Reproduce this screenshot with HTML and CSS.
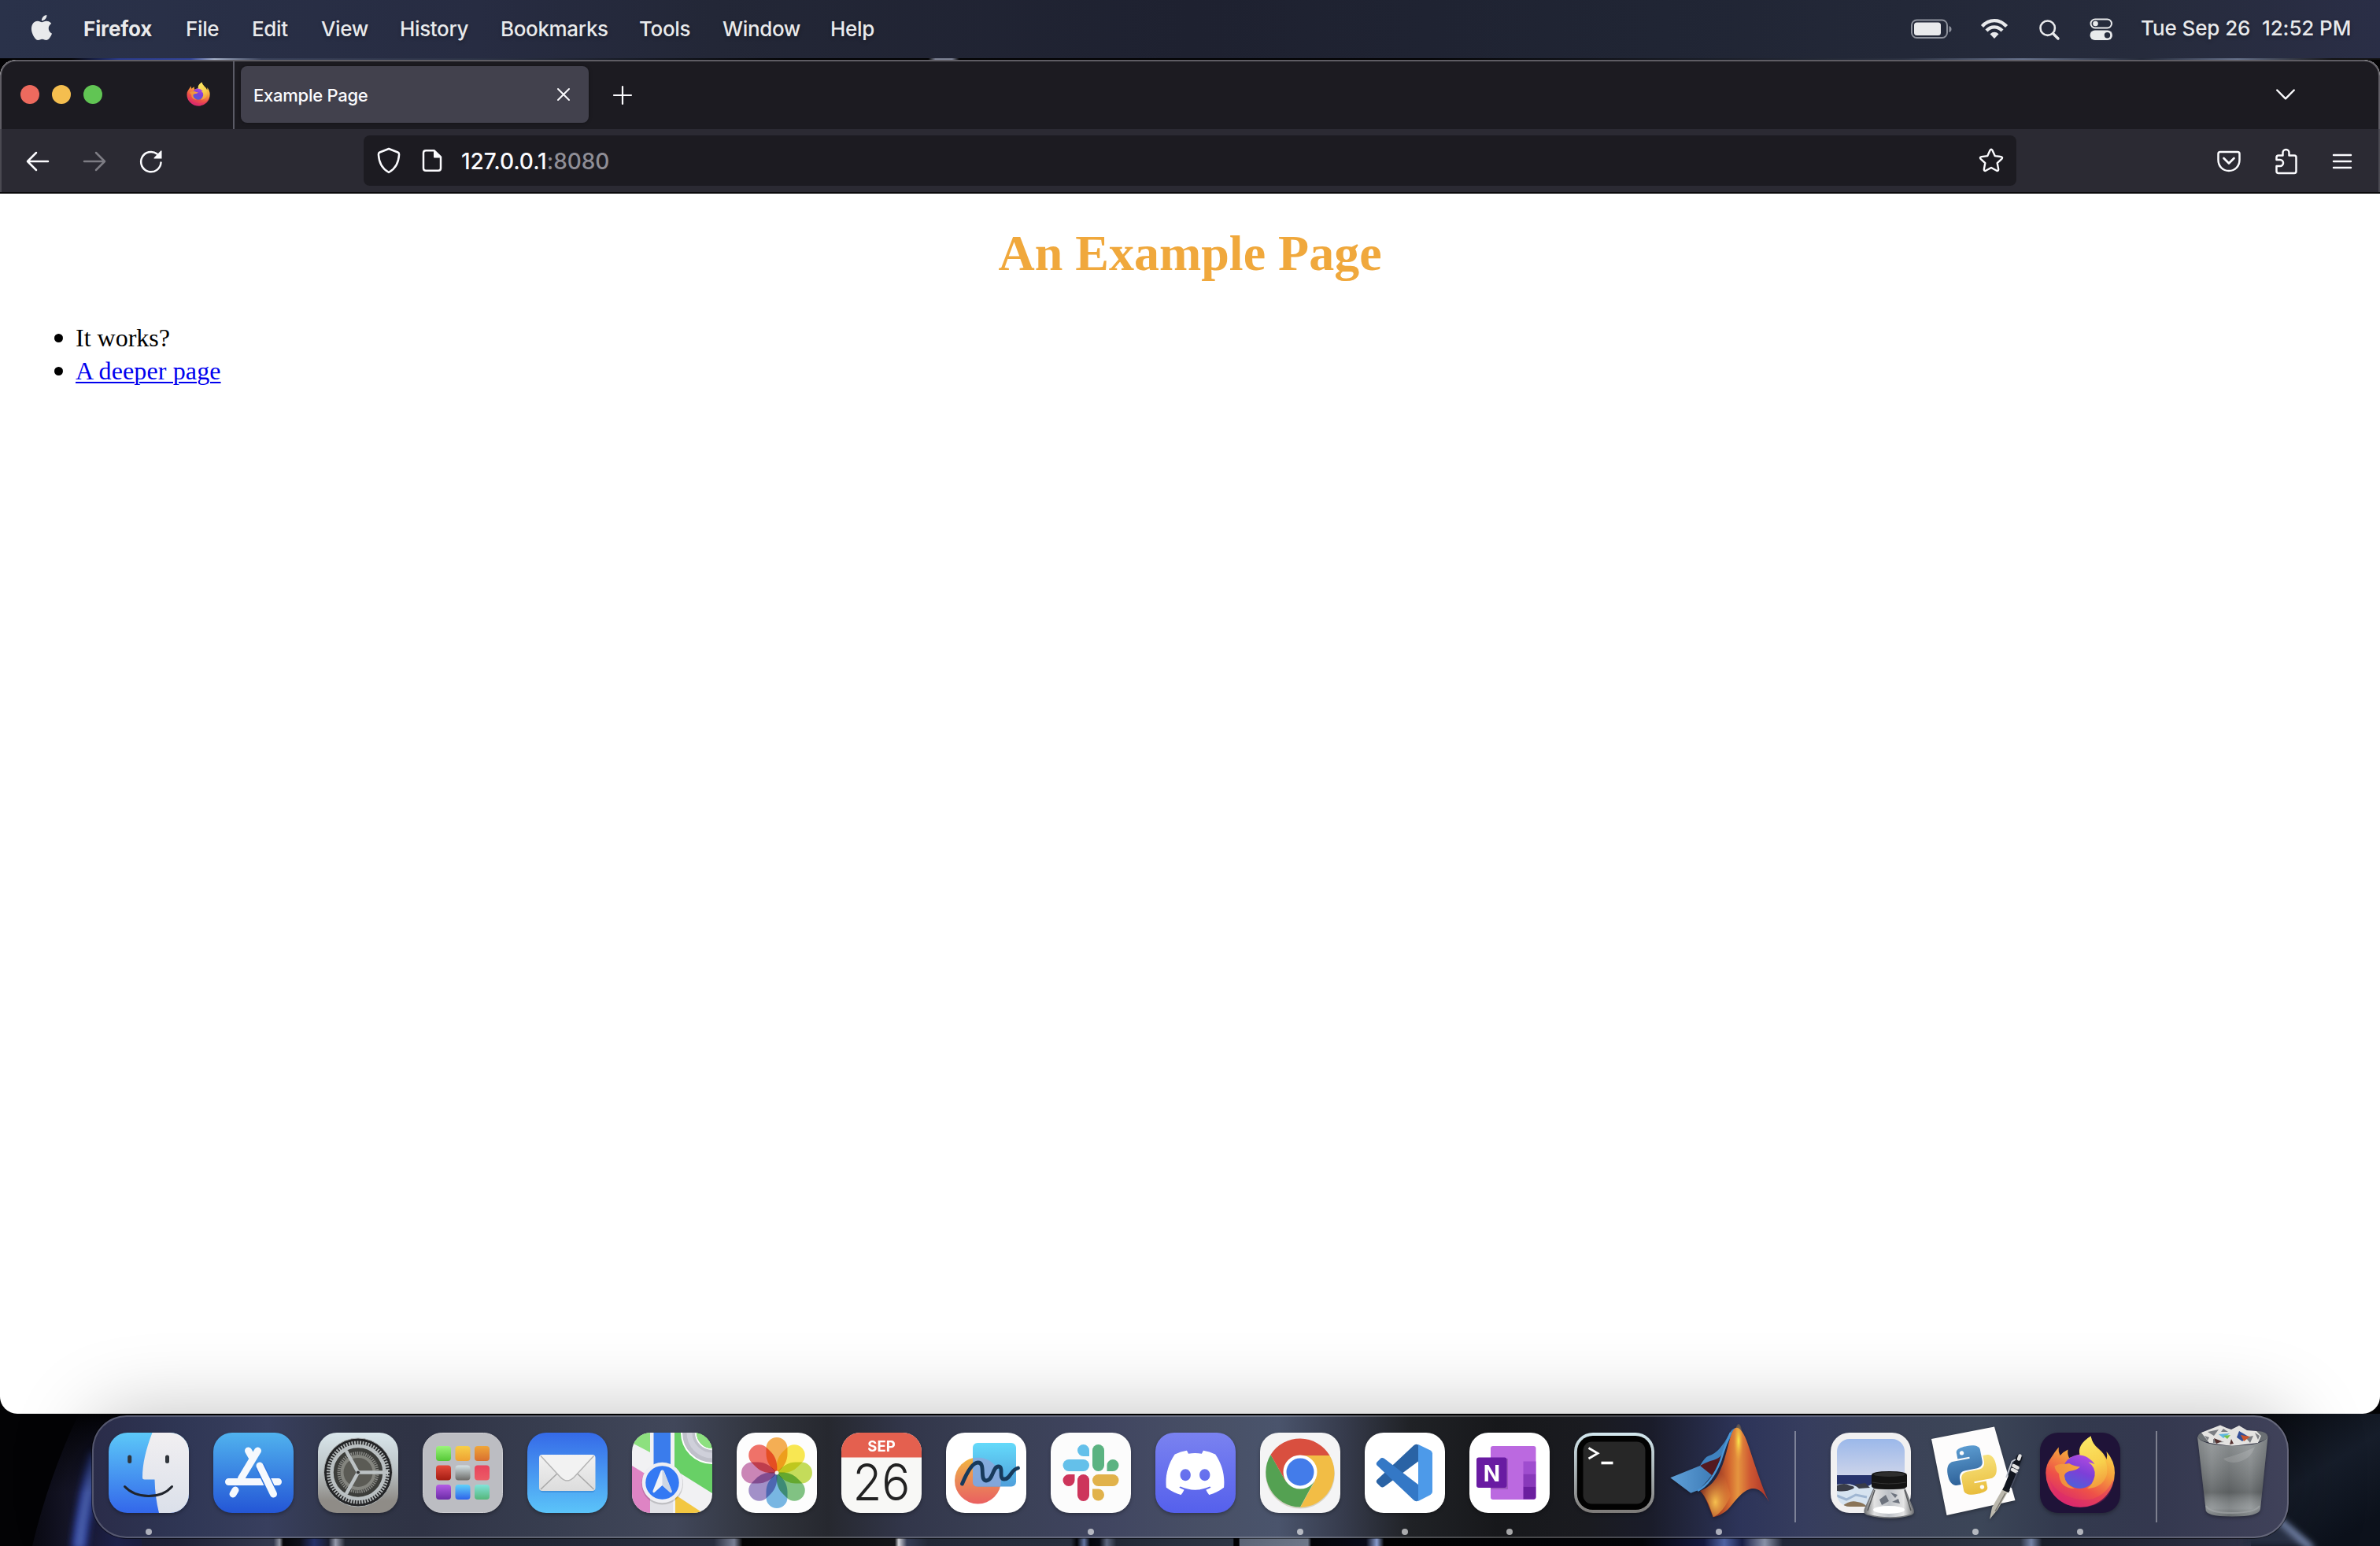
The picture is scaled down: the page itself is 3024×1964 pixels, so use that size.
FILE: index.html
```html
<!DOCTYPE html>
<html lang="en">
<head>
<meta charset="utf-8">
<title>Example Page</title>
<link rel="stylesheet" href="styles.css">
</head>
<body>
<div class="desktop">
  <header class="menubar">
    <nav class="menus">
      <svg class="apple" viewBox="0 0 24 24"><path d="M12.152 6.896c-.948 0-2.415-1.078-3.96-1.04-2.04.027-3.91 1.183-4.961 3.014-2.117 3.675-.546 9.103 1.519 12.09 1.013 1.454 2.208 3.09 3.792 3.039 1.52-.065 2.09-.987 3.935-.987 1.831 0 2.35.987 3.96.948 1.637-.026 2.676-1.48 3.676-2.948 1.156-1.688 1.636-3.325 1.662-3.415-.039-.013-3.182-1.221-3.22-4.857-.026-3.04 2.48-4.494 2.597-4.559-1.429-2.09-3.623-2.324-4.39-2.376-2-.156-3.675 1.09-4.61 1.09zM15.53 3.83c.843-1.012 1.4-2.427 1.245-3.83-1.207.052-2.662.805-3.532 1.818-.78.896-1.454 2.338-1.273 3.714 1.338.104 2.715-.688 3.559-1.701"/></svg>
      <span class="menu m-app">Firefox</span>
      <span class="menu m-file">File</span>
      <span class="menu m-edit">Edit</span>
      <span class="menu m-view">View</span>
      <span class="menu m-history">History</span>
      <span class="menu m-bookmarks">Bookmarks</span>
      <span class="menu m-tools">Tools</span>
      <span class="menu m-window">Window</span>
      <span class="menu m-help">Help</span>
    </nav>
    <div class="status">
      <svg class="battery" viewBox="0 0 52 26"><rect x="1" y="1.5" width="45" height="22.500" rx="6.500" fill="none" stroke="#8d919c" stroke-width="2"/><rect x="4" y="4.500" width="34" height="16.500" rx="3.500" fill="#e9eaec"/><path d="M48.500 9v8q3-1 3-4t-3-4z" fill="#8d919c"/></svg>
      <svg class="wifi" viewBox="0 0 34 26"><g fill="none" stroke="#e9eaec" stroke-width="4.200"><path d="M1.500 10.500Q8 3.200 17 3.200T32.500 10.500"/><path d="M7 16Q11.200 11.300 17 11.300T27 16"/></g><path d="M11.500 20.200Q17 15.500 22.500 20.200L17 26z" fill="#e9eaec"/></svg>
      <svg class="search" viewBox="0 0 26 26"><circle cx="10.700" cy="10.700" r="9.200" fill="none" stroke="#e9eaec" stroke-width="2.600"/><path d="M17.500 17.500l6.500 6.500" stroke="#e9eaec" stroke-width="3.400" stroke-linecap="round"/></svg>
      <svg class="control" viewBox="0 0 30 28"><rect x="1.500" y="1.500" width="26.500" height="11" rx="5.500" fill="none" stroke="#e9eaec" stroke-width="2"/><circle cx="7.500" cy="7" r="3.300" fill="#e9eaec"/><rect x=".5" y="15.500" width="28.500" height="12.500" rx="6.250" fill="#e9eaec"/><circle cx="22.500" cy="21.700" r="3.700" fill="#262c3d"/></svg>
      <span class="clock clock-date">Tue Sep 26</span>
      <span class="clock clock-time">12:52 PM</span>
    </div>
  </header>
  <div class="sliver"></div>

  <main class="window">
    <div class="tabstrip">
      <div class="lights"><i class="light close"></i><i class="light minimise"></i><i class="light zoom"></i></div>
      <svg class="pinned" viewBox="6 3 90 93"><use href="#firefox"/></svg>
      <div class="tab-edge"></div>
      <div class="tab"><span class="tab-title">Example Page</span>
        <svg class="tab-close" viewBox="0 0 16 16"><path d="M1 1l14 14M15 1L1 15" stroke="#fbfbfe" stroke-width="2" stroke-linecap="round"/></svg>
      </div>
      <svg class="newtab" viewBox="0 0 24 24"><path d="M12 1v22M1 12h22" stroke="#fbfbfe" stroke-width="2.200" stroke-linecap="round"/></svg>
      <svg class="alltabs" viewBox="0 0 24 14"><path d="M1.200 1.500L12 12.300 22.800 1.500" fill="none" stroke="#fbfbfe" stroke-width="2.400" stroke-linecap="round" stroke-linejoin="round"/></svg>
    </div>
    <div class="toolbar">
      <svg class="nav-icon" viewBox="0 0 32 32"><path d="M29 16H3.500M14 5L3 16l11 11" fill="none" stroke="#fbfbfe" stroke-width="2.500" stroke-linecap="round" stroke-linejoin="round"/></svg>
      <svg class="nav-icon" viewBox="0 0 32 32"><path d="M3 16h25.500M18 5l11 11-11 11" fill="none" stroke="#7d7c84" stroke-width="2.500" stroke-linecap="round" stroke-linejoin="round"/></svg>
      <svg class="nav-icon" viewBox="0 0 32 32"><path d="M28.500 17.500A12.700 12.700 0 1 1 23.500 6.500" fill="none" stroke="#fbfbfe" stroke-width="2.500" stroke-linecap="round"/><path d="M28.300 2.500q1.200-.8 1.200.8v9.200H20.500q-1.800 0-.5-1.500z" fill="#fbfbfe"/></svg>
      <div class="urlbar">
        <svg class="shield" viewBox="0 0 30 34"><path d="M15 2l11.500 4.500q1.700.8 1.600 2.800C27.500 20 23.500 27.500 15 32 6.500 27.500 2.500 20 1.900 9.300q-.1-2 1.600-2.800z" fill="none" stroke="#fbfbfe" stroke-width="2.500" stroke-linejoin="round"/></svg>
        <svg class="doc" viewBox="0 0 26 30"><path d="M15.500 2.200H5q-3 0-3 3v19.600q0 3 3 3h16q3 0 3-3V10.500z" fill="none" stroke="#fbfbfe" stroke-width="2.500" stroke-linejoin="round"/><path d="M15 2v8.500q0 1 1 1h8z" fill="#fbfbfe"/></svg>
        <span class="url">127.0.0.1<span class="port">:8080</span></span>
        <svg class="star" viewBox="0 0 32 32"><path d="M14.600 2.800q1.400-2.300 2.800 0l3.300 7.300 7.800 1q2.500.7.900 2.700l-5.700 5.400 1.500 7.900q0 2.500-2.300 1.700L16 25l-6.900 3.800q-2.300.8-2.300-1.700l1.500-7.900-5.700-5.400q-1.600-2 .9-2.700l7.800-1z" fill="none" stroke="#fbfbfe" stroke-width="2.400" stroke-linejoin="round"/></svg>
      </div>
      <div class="tools">
        <svg class="pocket" viewBox="0 0 30 28"><path d="M4 2h22q2.500 0 2.500 2.500V12C28.500 20 23 26 15 26S1.500 20 1.500 12V4.500Q1.500 2 4 2z" fill="none" stroke="#fbfbfe" stroke-width="2.500"/><path d="M8.500 10l6.500 6.500 6.500-6.500" fill="none" stroke="#fbfbfe" stroke-width="2.700" stroke-linecap="round" stroke-linejoin="round"/></svg>
        <svg class="puzzle" viewBox="0 0 28 34"><path d="M9.500 9V6a4 4 0 0 1 8 0v3.500H24q2.500 0 2.500 2.500v17.500q0 2.500-2.500 2.500H4q-2.500 0-2.500-2.500V23H6a4 4 0 0 0 0-8H1.500v-3q0-2.500 2.500-2.500h5.500z" fill="none" stroke="#fbfbfe" stroke-width="2.500" stroke-linejoin="round"/></svg>
        <svg class="burger" viewBox="0 0 24 20"><path d="M1 2h22M1 10h22M1 18h22" stroke="#fbfbfe" stroke-width="2.400" stroke-linecap="round"/></svg>
      </div>
    </div>
    <article class="page">
      <h1>An Example Page</h1>
      <ul class="list">
        <li>It works?</li>
        <li><a href="#deeper">A deeper page</a></li>
      </ul>
    </article>
  </main>

  <footer class="shelf">
    <svg class="wallpaper" viewBox="0 0 3024 168" preserveAspectRatio="none">
      <defs>
        <linearGradient id="wl" x1="0" x2="1" y1="0" y2="0"><stop offset="0" stop-color="#0a0a12"/><stop offset=".3" stop-color="#17172b"/><stop offset=".6" stop-color="#202450"/><stop offset="1" stop-color="#1b1e38"/></linearGradient>
        <linearGradient id="wt" x2="0" y2="1"><stop stop-color="#030305"/><stop offset=".6" stop-color="#030305" stop-opacity="0"/></linearGradient>
        <linearGradient id="wr" x1="0" y1="0" x2=".6" y2="1"><stop offset="0" stop-color="#07090e"/><stop offset=".55" stop-color="#161d2a"/><stop offset="1" stop-color="#0c111b"/></linearGradient>
        <linearGradient id="strip" gradientUnits="userSpaceOnUse" x1="0" y1="0" x2="3024" y2="0">
          <stop offset=".04" stop-color="#1b1e38"/><stop offset=".075" stop-color="#23263d"/><stop offset=".115" stop-color="#3a4058"/><stop offset=".1175" stop-color="#a5a9b8"/><stop offset=".119" stop-color="#08080c"/><stop offset=".126" stop-color="#11131f"/><stop offset=".132" stop-color="#2a3878"/><stop offset=".138" stop-color="#1d2236"/><stop offset=".141" stop-color="#a8aec2"/><stop offset=".145" stop-color="#252b3a"/><stop offset=".2" stop-color="#232938"/><stop offset=".3" stop-color="#2e3447"/><stop offset=".3085" stop-color="#8890a8"/><stop offset=".312" stop-color="#050506"/><stop offset=".376" stop-color="#17181d"/><stop offset=".3776" stop-color="#f0f1f8"/><stop offset=".381" stop-color="#3c4460"/><stop offset=".39" stop-color="#272e3e"/><stop offset=".45" stop-color="#2d3546"/><stop offset=".4525" stop-color="#04050a"/><stop offset=".4555" stop-color="#7085b8"/><stop offset=".458" stop-color="#05070e"/><stop offset=".462" stop-color="#0a0d18"/><stop offset=".465" stop-color="#6a7590"/><stop offset=".469" stop-color="#272e3d"/><stop offset=".518" stop-color="#343d4e"/><stop offset=".5185" stop-color="#020204"/><stop offset=".5205" stop-color="#020204"/><stop offset=".521" stop-color="#697387"/><stop offset=".5495" stop-color="#7d879b"/><stop offset=".551" stop-color="#04050a"/><stop offset=".574" stop-color="#0a0c1c"/><stop offset=".5785" stop-color="#9ab0e8"/><stop offset=".5815" stop-color="#020203"/><stop offset=".69" stop-color="#04050a"/><stop offset=".716" stop-color="#181d48"/><stop offset=".7245" stop-color="#5a70b8"/><stop offset=".732" stop-color="#1c2350"/><stop offset=".7415" stop-color="#9aa4bd"/><stop offset=".749" stop-color="#262c40"/><stop offset=".8" stop-color="#2b3240"/><stop offset=".849" stop-color="#343c4e"/><stop offset=".8535" stop-color="#8495bd"/><stop offset=".858" stop-color="#1d2230"/><stop offset=".95" stop-color="#35384f"/>
        </linearGradient>
        <filter id="soft" x="-100%" y="-50%" width="300%" height="200%"><feGaussianBlur stdDeviation="4"/></filter>
      </defs>
      <rect width="3024" height="168" fill="#030305"/>
      <path d="M100 0Q62 80 41 168H220V0z" fill="url(#wl)"/>
      <path d="M124 50Q107 110 100 172" fill="none" stroke="#2c3c9c" stroke-width="20" filter="url(#soft)"/>
      <path d="M124 50Q107 110 100 172" fill="none" stroke="#5c74bc" stroke-width="7" filter="url(#soft)"/>
      <path d="M0 0H220V168H0z" fill="url(#wt)"/>
      <path d="M180 150H2880V168H180z" fill="url(#strip)"/>
      <path d="M2860 0h164v168h-164z" fill="url(#wr)"/>
      <path d="M2850 168V140L2893 134 2938 168z" fill="#2c3046" filter="url(#soft)"/>
      <path d="M2890 130l48 42" stroke="#8fa3cf" stroke-width="7" filter="url(#soft)"/>
    </svg>
    <div class="dock">
      <div class="slot running">
        <svg class="icon" viewBox="0 0 102 102">
          <defs><linearGradient id="fb" x2="0" y2="1"><stop stop-color="#5cc8f8"/><stop offset="1" stop-color="#3367ea"/></linearGradient><linearGradient id="fw" x2="0" y2="1"><stop stop-color="#f1eff1"/><stop offset="1" stop-color="#dbe0ea"/></linearGradient><clipPath id="sq"><rect width="102" height="102" rx="24"/></clipPath></defs>
          <g clip-path="url(#sq)"><rect width="102" height="102" fill="url(#fb)"/><path d="M55.500 0C47 22 43 40 43 57q0 2.500 2.500 2.500H58.500Q59 82 64 102H102V0z" fill="url(#fw)"/></g>
          <path d="M26.700 31v5.500M74.500 31v5.500" stroke="#30353b" stroke-width="5" stroke-linecap="round"/><path d="M20.500 68.500C35 84 66 85 80.500 68.500" fill="none" stroke="#20242c" stroke-width="3" stroke-linecap="round"/>
        </svg></div>
      <div class="slot">
        <svg class="icon" viewBox="0 0 102 102">
          <defs><linearGradient id="ab" x2="0" y2="1"><stop stop-color="#50b2ee"/><stop offset="1" stop-color="#2456d6"/></linearGradient></defs>
          <rect width="102" height="102" rx="24" fill="url(#ab)"/>
          <g stroke="#f6f9fd" stroke-width="9" stroke-linecap="round"><path d="M44.500 23l4 7M19.500 62.500H82.500M28 73l-3 5"/><path d="M59 42l17 35.500" stroke="#2e74df" stroke-width="12" stroke-linecap="butt"/><path d="M59 42l17.500 36"/><path d="M56.500 23L35.500 58"/></g>
          <path d="M32 58h9" stroke="#f6f9fd" stroke-width="2"/>
        </svg></div>
      <div class="slot">
        <svg class="icon" viewBox="0 0 102 102">
          <defs><linearGradient id="sb" x2="0" y2="1"><stop stop-color="#d9e6eb"/><stop offset=".45" stop-color="#bcc4c7"/><stop offset=".85" stop-color="#8f8c87"/></linearGradient></defs>
          <rect width="102" height="102" rx="24" fill="url(#sb)"/>
          <circle cx="51" cy="50.500" r="43.500" fill="#232426" stroke="#adb2b3" stroke-width="1"/>
          <circle cx="51" cy="50.500" r="37.500" fill="none" stroke="#b0b5b6" stroke-width="5" stroke-dasharray="1.900 1.600"/>
          <circle cx="51" cy="50.500" r="33.500" fill="#3c3d3a" stroke="#b9bfc1" stroke-width="4.500"/>
          <circle cx="51" cy="50.500" r="24.500" fill="none" stroke="#898a86" stroke-width="4" stroke-dasharray="1.500 1.200"/>
          <circle cx="51" cy="50.500" r="20.500" fill="#5b5b55" stroke="#84857f" stroke-width="4"/>
          <path d="M51 50.500H83M51 50.500L36 23.500M51 50.500L36 77.500" stroke="#bcc2c4" stroke-width="4.500"/><path d="M84 50.500l5-4v8zM34.500 21l-4 5 8-3zM34.500 80l-4-5 8 3z" fill="#bcc2c4"/>
          <circle cx="51" cy="50.500" r="2.500" fill="#333" stroke="#bcc2c4"/>
        </svg></div>
      <div class="slot">
        <svg class="icon" viewBox="0 0 102 102">
          <defs>
            <linearGradient id="l1" x2="0" y2="1"><stop stop-color="#9cf47c"/><stop offset="1" stop-color="#55c836"/></linearGradient><linearGradient id="l2" x2="0" y2="1"><stop stop-color="#f7cf49"/><stop offset="1" stop-color="#efa233"/></linearGradient><linearGradient id="l3" x2="0" y2="1"><stop stop-color="#efa63a"/><stop offset="1" stop-color="#d96f2f"/></linearGradient>
            <linearGradient id="l4" x2="0" y2="1"><stop stop-color="#e54b3c"/><stop offset="1" stop-color="#a41c12"/></linearGradient><linearGradient id="l5" x2="0" y2="1"><stop stop-color="#d5e2e6"/><stop offset="1" stop-color="#6c6b68"/></linearGradient><linearGradient id="l6" x2="0" y2="1"><stop stop-color="#e8435c"/><stop offset="1" stop-color="#ec5c66"/></linearGradient>
            <linearGradient id="l7" x2="0" y2="1"><stop stop-color="#b45de6"/><stop offset="1" stop-color="#6b2ca6"/></linearGradient><linearGradient id="l8" x2="0" y2="1"><stop stop-color="#60d2fa"/><stop offset="1" stop-color="#2e62ea"/></linearGradient><linearGradient id="l9" x2="0" y2="1"><stop stop-color="#82e4da"/><stop offset="1" stop-color="#55b67a"/></linearGradient>
          </defs>
          <rect x=".5" y=".5" width="101" height="101" rx="24" fill="#bcbdc2" stroke="#ceced2"/>
          <rect x="17" y="17" width="19" height="19" rx="4" fill="url(#l1)"/><rect x="41.500" y="17" width="19" height="19" rx="4" fill="url(#l2)"/><rect x="66" y="17" width="19" height="19" rx="4" fill="url(#l3)"/>
          <rect x="17" y="41.500" width="19" height="19" rx="4" fill="url(#l4)"/><rect x="41.500" y="41.500" width="19" height="19" rx="4" fill="url(#l5)"/><rect x="66" y="41.500" width="19" height="19" rx="4" fill="url(#l6)"/>
          <rect x="17" y="66" width="19" height="19" rx="4" fill="url(#l7)"/><rect x="41.500" y="66" width="19" height="19" rx="4" fill="url(#l8)"/><rect x="66" y="66" width="19" height="19" rx="4" fill="url(#l9)"/>
        </svg></div>
      <div class="slot">
        <svg class="icon" viewBox="0 0 102 102">
          <defs><linearGradient id="mb" x2="0" y2="1"><stop stop-color="#356ae8"/><stop offset="1" stop-color="#5bc4f9"/></linearGradient><linearGradient id="me" x2="0" y2="1"><stop stop-color="#f2f2f2"/><stop offset="1" stop-color="#dcdcdc"/></linearGradient></defs>
          <rect width="102" height="102" rx="24" fill="url(#mb)"/>
          <rect x="16" y="30" width="70" height="46" rx="4" fill="#2c7bc8" opacity=".45"/>
          <rect x="15" y="28" width="71.500" height="46" rx="4" fill="url(#me)"/>
          <path d="M17 72l21-20M84.500 72l-21-20" stroke="#a9a9a9" stroke-width="1.600"/>
          <path d="M17 29.500L42 56.500q8.500 9 17.500 0L84.500 29.500" fill="#f2f2f2" stroke="#b4b4b4" stroke-width="1.500"/>
        </svg></div>
      <div class="slot">
        <svg class="icon" viewBox="0 0 102 102">
          <g clip-path="url(#sq)"><rect width="102" height="102" fill="#f1f1f3"/>
            <path d="M0 0H23V25L0 13z" fill="#8de07f"/><path d="M0 42L23 56V102H0z" fill="#de84c4"/>
            <path d="M54 0H102V77L54 47z" fill="#68d066"/><path d="M55 79L90 102H55z" fill="#f3c741"/><path d="M23 75H52V102H23z" fill="#e1e1e6"/>
            <circle cx="102" cy="0" r="30" fill="none" stroke="#fff" stroke-width="20"/><circle cx="102" cy="0" r="30" fill="none" stroke="#bfc0ca" stroke-width="16"/><circle cx="102" cy="0" r="29" fill="none" stroke="#cfd0da" stroke-width="7"/><circle cx="102" cy="0" r="20" fill="#8de07f"/>
            <path d="M27.500 0H49V44H27.500z" fill="#3a7cec"/>
            <circle cx="38.500" cy="65" r="26.500" fill="#000" opacity=".15"/></g>
          <circle cx="38.500" cy="63.500" r="23.500" fill="#3479f3" stroke="#efeff3" stroke-width="4.500"/><path d="M38.500 47.500q1.700 0 2.300 2L50.500 74q.5 3-2 2l-10-9-10 9q-2.500 1-2-2L36.200 49.500q.6-2 2.300-2z" fill="#f1f3f7"/><path d="M38.500 47.500q1.700 0 2.300 2L50.500 74q.5 3-2 2l-10-9z" fill="#cdd6e4"/>
        </svg></div>
      <div class="slot">
        <svg class="icon" viewBox="0 0 102 102">
          <defs><path id="petal" d="M51 51C42 44 37.500 36 37.500 27V19.500a13.500 13.500 0 0 1 27 0V27C64.500 36 60 44 51 51z"/></defs>
          <rect width="102" height="102" rx="24" fill="#fdfdfd"/>
          <g class="petals">
            <use href="#petal" fill="#f3a745"/><use href="#petal" fill="#f8e543" transform="rotate(45 51 51)"/><use href="#petal" fill="#bfd94c" transform="rotate(90 51 51)"/><use href="#petal" fill="#76bd78" transform="rotate(135 51 51)"/><use href="#petal" fill="#6cb0e0" transform="rotate(180 51 51)"/><use href="#petal" fill="#9a86c4" transform="rotate(225 51 51)"/><use href="#petal" fill="#c67cb0" transform="rotate(270 51 51)"/><use href="#petal" fill="#ee665c" transform="rotate(315 51 51)"/>
          </g><circle cx="51" cy="51" r="2.500" fill="#f4f0e8"/>
        </svg></div>
      <div class="slot">
        <svg class="icon" viewBox="0 0 102 102">
          <g clip-path="url(#sq)"><rect width="102" height="102" fill="#f8f8f6"/><rect width="102" height="31.500" fill="#e4604f"/></g>
          <text class="cal-month" x="51" y="24" text-anchor="middle">SEP</text><text class="cal-day" x="51" y="86" text-anchor="middle" textLength="73" lengthAdjust="spacingAndGlyphs">26</text>
        </svg></div>
      <div class="slot">
        <svg class="icon" viewBox="0 0 102 102">
          <defs><linearGradient id="fo" x2="0" y2="1"><stop stop-color="#f2b640"/><stop offset=".5" stop-color="#ea8a58"/><stop offset="1" stop-color="#ea5f60"/></linearGradient><linearGradient id="fs" x2="0" y2="1"><stop stop-color="#64dafa"/><stop offset="1" stop-color="#4fa0dc"/></linearGradient></defs>
          <rect width="102" height="102" rx="24" fill="#fff"/><circle cx="40.500" cy="61" r="29.500" fill="url(#fo)"/><rect x="34" y="13" width="55" height="55.500" rx="6" fill="url(#fs)"/><path d="M34 32.500A29.500 29.500 0 0 1 69 68.500H40q-6 0-6-6z" fill="#8ea6da" opacity=".8"/>
          <path d="M20.500 65C26 52 33 38 40.500 38 51 38 42 61 51 61S59 43 66.500 43 66 59 74 59s8-12 17.500-14" fill="none" stroke="#173a5c" stroke-width="4.800" stroke-linecap="round"/>
        </svg></div>
      <div class="slot running">
        <svg class="icon" viewBox="0 0 102 102">
          <rect width="102" height="102" rx="24" fill="#fcfcfc"/>
          <path d="M49 30H41.500a7.500 7.500 0 1 1 7.500-7.500z" fill="#64c0ea"/><rect x="15.500" y="34" width="33.500" height="15" rx="7.500" fill="#64c0ea"/>
          <rect x="53" y="15" width="15" height="34" rx="7.500" fill="#5bb381"/><path d="M71.500 49V41.500a7.500 7.500 0 1 1 7.500 7.500z" fill="#5bb381"/>
          <path d="M30.500 53V60.500a7.500 7.500 0 1 1-7.500-7.500z" fill="#cd355b"/><rect x="34" y="53" width="15" height="34" rx="7.500" fill="#cd355b"/>
          <rect x="53" y="53" width="33.500" height="15" rx="7.500" fill="#e1b24b"/><path d="M53 71.500H60.500a7.500 7.500 0 1 1-7.500 7.500z" fill="#e1b24b"/>
        </svg></div>
      <div class="slot">
        <svg class="icon" viewBox="0 0 102 102">
          <defs><linearGradient id="db" x2="0" y2="1"><stop stop-color="#7a82f0"/><stop offset="1" stop-color="#5560ec"/></linearGradient></defs>
          <rect width="102" height="102" rx="24" fill="url(#db)"/>
          <path fill="#fff" transform="translate(13.500 14) scale(3.080)" d="M20.317 4.3698a19.7913 19.7913 0 00-4.8851-1.5152.0741.0741 0 00-.0785.0371c-.211.3753-.4447.8648-.6083 1.2495-1.8447-.2762-3.68-.2762-5.4868 0-.1636-.3933-.4058-.8742-.6177-1.2495a.077.077 0 00-.0785-.037 19.7363 19.7363 0 00-4.8852 1.515.0699.0699 0 00-.0321.0277C.5334 9.0458-.319 13.5799.0992 18.0578a.0824.0824 0 00.0312.0561c2.0528 1.5076 4.0413 2.4228 5.9929 3.0294a.0777.0777 0 00.0842-.0276c.4616-.6304.8731-1.2952 1.226-1.9942a.076.076 0 00-.0416-.1057c-.6528-.2476-1.2743-.5495-1.8722-.8923a.077.077 0 01-.0076-.1277c.1258-.0943.2517-.1923.3718-.2914a.0743.0743 0 01.0776-.0105c3.9278 1.7933 8.18 1.7933 12.0614 0a.0739.0739 0 01.0785.0095c.1202.099.246.1981.3728.2924a.077.077 0 01-.0066.1276 12.2986 12.2986 0 01-1.873.8914.0766.0766 0 00-.0407.1067c.3604.698.7719 1.3628 1.225 1.9932a.076.076 0 00.0842.0286c1.961-.6067 3.9495-1.5219 6.0023-3.0294a.077.077 0 00.0313-.0552c.5004-5.177-.8382-9.6739-3.5485-13.6604a.061.061 0 00-.0312-.0286zM8.02 15.3312c-1.1825 0-2.1569-1.0857-2.1569-2.419 0-1.3332.9555-2.4189 2.157-2.4189 1.2108 0 2.1757 1.0952 2.1568 2.419 0 1.3332-.9555 2.4189-2.1569 2.4189zm7.9748 0c-1.1825 0-2.1569-1.0857-2.1569-2.419 0-1.3332.9554-2.4189 2.1569-2.4189 1.2108 0 2.1757 1.0952 2.1568 2.419 0 1.3332-.946 2.4189-2.1568 2.4189Z"/>
        </svg></div>
      <div class="slot running">
        <svg class="icon" viewBox="0 0 102 102">
          <rect width="102" height="102" rx="24" fill="#f4f4f5"/>
          <circle cx="51" cy="52.500" r="44" fill="#c9c4b4" opacity=".7"/>
          <path d="M51 29H88.500A44 44 0 0 1 51 95L70 61z" fill="#f2bd45"/>
          <path d="M13.500 28L32.500 61.500 69 61.500 51 94.500A44 44 0 0 1 13.500 28z" fill="#54a152"/>
          <path d="M13.500 28A44 44 0 0 1 88.500 29H51L32.500 61.500z" fill="#d94f3f"/>
          <circle cx="51" cy="50" r="19.500" fill="#437cea" stroke="#fff" stroke-width="4"/>
        </svg></div>
      <div class="slot running">
        <svg class="icon" viewBox="0 0 102 102">
          <rect width="102" height="102" rx="24" fill="#fff"/>
          <path d="M68 15.500V36.500L25 68.500q-3.500 2-5.500-.5L15.500 64q-1.500-2 0-4L62 16.500q3-3 6-1z" fill="#2a63a5"/>
          <path d="M68 86.500V66L25 33q-3.500-2-5.500.5L15.500 37.500q-1.500 2 0 4L62 85.500q3 3 6 1z" fill="#3478c6"/>
          <path d="M68 15l15.500 7.500q2.500 1.500 2.500 4V75q0 2.500-2.500 4L68 87z" fill="#4d9ae9"/>
        </svg></div>
      <div class="slot running">
        <svg class="icon" viewBox="0 0 102 102">
          <rect width="102" height="102" rx="24" fill="#fff"/>
          <rect x="27" y="17" width="57.500" height="68" rx="3" fill="#bb69e0"/><path d="M68.500 36.500h16v16h-16z" fill="#9f4dcf"/><path d="M68.500 52.500h16v16h-16z" fill="#8839ba"/><path d="M68.500 68.500h16v13q0 3-3 3h-13z" fill="#6b1f9f"/>
          <rect x="27" y="33" width="22" height="39" fill="#000" opacity=".15"/><rect x="9" y="31.500" width="38.500" height="38.500" rx="3" fill="#691ba2"/>
          <text class="note-n" x="28.300" y="61.500" text-anchor="middle">N</text>
        </svg></div>
      <div class="slot">
        <svg class="icon" viewBox="0 0 102 102">
          <defs><linearGradient id="tb" x2="0" y2="1"><stop stop-color="#d3e8ef"/><stop offset="1" stop-color="#7d7a78"/></linearGradient></defs>
          <rect width="102" height="102" rx="24" fill="url(#tb)"/><rect x="3.800" y="4" width="94.400" height="94" rx="20" fill="#020202"/><rect x="11.500" y="11.500" width="79" height="79" rx="11" fill="#272727"/>
          <path d="M18.500 19.500L30 26.300 18.500 33" fill="none" stroke="#fff" stroke-width="2.800"/><path d="M34.500 38.500h15" stroke="#fff" stroke-width="3.600"/>
        </svg></div>
      <div class="slot running">
        <svg class="icon" viewBox="0 0 102 102">
          <defs><linearGradient id="mo"><stop stop-color="#6e2320"/><stop offset=".2" stop-color="#8e2f22"/><stop offset=".42" stop-color="#d2662f"/><stop offset=".55" stop-color="#e5953f"/><stop offset=".72" stop-color="#cf5a33"/><stop offset="1" stop-color="#a93128"/></linearGradient><linearGradient id="mw" x1="0" y1="0" x2="1" y2="0"><stop stop-color="#5fa0d8"/><stop offset="1" stop-color="#3f7db8"/></linearGradient>
          <radialGradient id="my" cx=".5" cy=".4" r=".5"><stop stop-color="#fae94e"/><stop offset="1" stop-color="#f3a03a" stop-opacity="0"/></radialGradient><radialGradient id="mz" cx=".5" cy=".7" r=".6"><stop stop-color="#f6c04e"/><stop offset="1" stop-color="#f0923a" stop-opacity="0"/></radialGradient></defs>
          <path d="M27 42Q33 31 38 29.500 46 27 52 20 59 12 64 2 67-5 72-6L40 56z" fill="#3f82bf"/>
          <path d="M27 42Q32 39 40 36 50 34 55 28L42 56z" fill="#541a20"/>
          <path d="M-10.700 57.300L27 42 42 54Q33 66 25 73L15.300 76.700z" fill="url(#mw)"/>
          <path d="M72-6Q80-8 88 15C96 38 104 65 114.700 88 108 75 100 70 93 71 80 73 70 90 62 98 53 106 43.700 107.300 43.700 107.300 38 95 34 80 27 74 45 68 52 52 58 34 64 14 66-2 72-6z" fill="url(#mo)"/>
          <path d="M27 74Q45 68 55 44L66 80Q56 102 43.700 107.300 36 82 27 74z" fill="url(#mz)"/>
          <ellipse cx="76" cy="16" rx="6" ry="27" fill="url(#my)"/>
          <path d="M24 74Q42 64 53 36 62 8 66 0" fill="none" stroke="#4a96d6" stroke-width="2.500"/>
        </svg></div>
      <div class="divider apps-end"></div>
      <div class="slot">
        <svg class="icon" viewBox="0 0 102 102">
          <defs><linearGradient id="ps" x2="0" y2="1"><stop stop-color="#9bb8ea"/><stop offset="1" stop-color="#cdd4ea"/></linearGradient><linearGradient id="jar" x1="0" x2="1"><stop stop-color="#6f7072"/><stop offset=".2" stop-color="#e2e2e2"/><stop offset=".5" stop-color="#bcc0c6"/><stop offset=".8" stop-color="#e5e5e5"/><stop offset="1" stop-color="#77787a"/></linearGradient></defs>
          <rect width="102" height="102" rx="24" fill="#f1f0f1"/>
          <clipPath id="pc"><rect x="8" y="8" width="86" height="86" rx="16"/></clipPath>
          <g clip-path="url(#pc)"><rect x="8" y="8" width="86" height="47" fill="url(#ps)"/><rect x="8" y="54" width="86" height="18" fill="#27336c"/><path d="M8 66q14-3 24 2t22-4 40 2v30H8z" fill="#d6e3f0"/><path d="M8 67q10-4 16 0 8 1 5 4-10 5-21 3zM30 66l14-2 6 6-14 1z" fill="#3a3d48"/><path d="M14 94q10-9 20-6 8 1 12 6z" fill="#8a7458"/><path d="M8 80l12 5 12-6 14 3" fill="none" stroke="#9fb6d2" stroke-width="3"/></g>
          <path d="M55 71L43.500 97q-2 5 3 7 14 4 29 4t27-4q4-2 2-7L94 71z" fill="url(#jar)" stroke="#77797d" stroke-width="1.500"/><path d="M56 73L47 99M94 73l8 26" stroke="#55575a" stroke-width="1.500"/><ellipse cx="74" cy="98" rx="20" ry="5" fill="#fff"/><path d="M62 85l8-6 4 8-9 5zM76 76l9 3-3 4zM78 88l8-4 2 6z" fill="#6d737e"/>
          <path d="M52 54q0-5 22.500-5T97 54V68q0 4-22.500 4T52 68z" fill="#141414"/><ellipse cx="74.500" cy="53" rx="20" ry="3" fill="#2e2e2e"/><path d="M53 63q20 4 43 0" fill="none" stroke="#333"/>
        </svg></div>
      <div class="slot running">
        <svg class="icon" viewBox="0 0 102 102">
          <path d="M-5 8L75-7.500 101.500 86 14.500 105z" fill="#fdfcfc"/>
          <defs><linearGradient id="py1" x2="0" y2="1"><stop stop-color="#5b9bd0"/><stop offset="1" stop-color="#2f6299"/></linearGradient><linearGradient id="py2" x2="0" y2="1"><stop stop-color="#e9bd3c"/><stop offset="1" stop-color="#f7e27c"/></linearGradient>
          <path id="snake" d="M14.250.18l.9.2.73.26.59.3.45.32.34.34.25.34.16.33.1.3.04.26.02.2-.01.13V8.500l-.05.63-.13.55-.21.46-.26.38-.3.31-.33.25-.35.19-.35.14-.33.1-.3.07-.26.04-.21.02H8.770l-.69.05-.59.14-.5.22-.41.27-.33.32-.27.35-.2.36-.15.37-.1.35-.07.32-.04.27-.02.21v3.060H3.170l-.21-.03-.28-.07-.32-.12-.35-.18-.36-.26-.36-.36-.35-.46-.32-.59-.28-.73-.21-.88-.14-1.050-.05-1.230.06-1.220.16-1.040.24-.87.32-.71.36-.57.4-.44.42-.33.42-.24.4-.16.36-.1.32-.05.24-.01h.16l.06.01h8.160v-.83H6.180l-.01-2.750-.02-.37.05-.34.11-.31.17-.28.25-.26.31-.23.38-.2.44-.18.51-.15.58-.12.64-.1.71-.06.77-.04.84-.02 1.270.05zm-6.300 1.980l-.23.33-.08.41.08.41.23.34.33.22.41.09.41-.09.33-.22.23-.34.08-.41-.08-.41-.23-.33-.33-.22-.41-.09-.41.09z"/></defs>
          <g transform="translate(46.500 47.500) rotate(-11) scale(2.600) translate(-12 -12)"><use href="#snake" fill="url(#py1)"/><use href="#snake" fill="url(#py2)" transform="rotate(180 12 12)"/></g>
          <path d="M106.500 32L91 70" stroke="#11151f" stroke-width="8" stroke-linecap="round"/><path d="M107.500 29.500l-1.500 4M99.500 42l5 2.500M98 47l5 2.500" stroke="#e2e2e2" stroke-width="4.500" stroke-linecap="round"/><path d="M102 34l-4.500 2.500L90 57" fill="none" stroke="#c3c7d2" stroke-width="1.800"/><path d="M104.500 50L96 70" stroke="#4a5064" stroke-width="1.500"/><path d="M86.500 70l7 3L79 98l-10 12 3-15z" fill="#bcb9ae"/><path d="M89 77l-13 23" stroke="#77746c" stroke-width="1.500"/><path d="M86 71l8 3.500" stroke="#15181f" stroke-width="4"/>
        </svg></div>
      <div class="slot running">
        <svg class="icon" viewBox="0 0 102 102">
          <defs>
            <linearGradient id="ff1" x1=".8" y1=".1" x2=".35" y2="1"><stop stop-color="#fbe04e"/><stop offset=".35" stop-color="#f6a03c"/><stop offset=".68" stop-color="#ee5148"/><stop offset="1" stop-color="#d9286f"/></linearGradient>
            <linearGradient id="ff2" x1=".7" y1="0" x2=".3" y2="1"><stop stop-color="#b14be0"/><stop offset=".5" stop-color="#7d3fd8"/><stop offset="1" stop-color="#4c62d8"/></linearGradient>
            <linearGradient id="ff3" x1=".4" y1="0" x2=".6" y2="1"><stop stop-color="#fbe765"/><stop offset=".55" stop-color="#f8d04c"/><stop offset="1" stop-color="#f29a3d"/></linearGradient>
            <linearGradient id="ff4" x1="1" y1="0" x2="0" y2=".6"><stop stop-color="#f5a83c"/><stop offset="1" stop-color="#f08a3e"/></linearGradient>
            <g id="firefox">
              <path d="M23.700 18.500Q23 24 25.500 29 30 24 35.500 21.500 34.500 27 37 32L52 27Q50 14 64.500 4.500 66 14 75 21 82 27 84.500 34 86 29 84.500 24 95 36 95 51A43.800 43.800 0 0 1 7.300 51Q7.500 40 14 32 19 24 23.700 18.500z" fill="url(#ff1)"/>
              <path d="M12 60Q24 82 52 85T94 58Q90 94 51 95 22 94 12 60z" fill="#d92670" opacity=".35"/>
              <circle cx="50.500" cy="49.500" r="21.500" fill="url(#ff2)"/>
              <path d="M64.500 4.500Q47 15 50.500 28.500 58 29 63 33.500 67 36 69.500 40 65 38 61.500 37.500 71 44 69.500 55 67 66 60 71 80 70 85 53 87 40 79 26 66 16 64.500 4.500z" fill="url(#ff3)"/>
              <path d="M18.500 42.500Q24 39 31 40L37 39Q42 42 51 43.500 46 48 37 49 31 51 31 55 32 66 44 71 25 71 24 52 19 48 18.500 42.500z" fill="url(#ff4)"/>
            </g>
          </defs>
          <rect width="102" height="102" rx="23" fill="#1f1338"/><use href="#firefox"/>
        </svg></div>
      <div class="divider files-end"></div>
      <div class="slot">
        <svg class="icon" viewBox="0 0 102 102">
          <defs><linearGradient id="tr"><stop stop-color="#6d7274"/><stop offset=".2" stop-color="#888d8f"/><stop offset=".45" stop-color="#74797b"/><stop offset=".75" stop-color="#8b9092"/><stop offset="1" stop-color="#64696c"/></linearGradient><linearGradient id="tv" x2="0" y2="1"><stop stop-color="#fff" stop-opacity=".15"/><stop offset=".7" stop-color="#000" stop-opacity=".22"/><stop offset=".9" stop-color="#fff" stop-opacity=".12"/><stop offset="1" stop-color="#000" stop-opacity=".1"/></linearGradient></defs>
          <path d="M7.500 5Q9-1 20-2H84q12 1 12.500 7Q94 14 51 15 9 14 7.500 5z" fill="#6a6f73"/>
          <path d="M12 0L22-4 36-9.500 44-6 50-4 60-9 70-3 82-2 88 4 84 13 51 17 22 13z" fill="#e4e3e1"/><path d="M20-1l14-3-6 8zM27 8l14 4-14 1zM68 6l10-2-4 9zM80 0l6 4-2 5zM40-5l6 4-9 0zM16 4l6 2-2 4z" fill="#7b7d82"/><path d="M34 2l14-1-8 6z" fill="#5fb8e0"/><path d="M40 4l9-1-4 5z" fill="#76c34a"/><path d="M60-2l12 7-8 6-7-5z" fill="#344f96"/><path d="M62 3l12 2-8 6z" fill="#c8552e"/><path d="M28 7l10 4-7 3zM50 8l3 6-5 1z" fill="#54302e"/>
          <path d="M7 5Q12 16 51 16.500T96.500 5L87 97Q86 106.500 51 106.500T17.500 97z" fill="url(#tr)"/><path d="M7 5Q12 16 51 16.500T96.500 5L87 97Q86 106.500 51 106.500T17.500 97z" fill="url(#tv)"/><path d="M40 33Q66 26 80 18 74 36 54 38 44 38 40 33z" fill="#fff" opacity=".13"/><path d="M18 93Q22 102 51 102T86 93" fill="none" stroke="#a5a9aa" stroke-width="2" opacity=".6"/>
        </svg></div>
    </div>
  </footer>
</div>
</body>
</html>
```
FILE: styles.css
```css
* { box-sizing: border-box; }
body { margin: 0; background: #030305; font-family: Inter, "Liberation Sans", sans-serif; }
svg { display: block; flex: none; overflow: visible; }

.desktop { display: grid; grid-template-rows: 74px 2px 1720px 168px; width: 3024px; height: 1964px; overflow: hidden; }

/* menu bar */
.menubar { display: flex; justify-content: space-between; background: linear-gradient(90deg, #2a324a 0, #272c42 20%, #232737 30%, #1e2130 50%, #202534 70%, #262b3c 90%, #2a2e46 100%); color: #e9eaec; font-size: 26px; font-weight: 500; letter-spacing: -.35px; line-height: 74px; text-shadow: 0 2px 5px rgba(0,0,0,.3); white-space: nowrap; }
.menus { display: flex; padding-left: 37px; }
.apple { width: 32px; height: 32px; margin: 19px 37px 0 0; fill: #e9eaec; }
.m-app { width: 130px; font-weight: 700; letter-spacing: -.1px; }
.m-file { width: 84px; }
.m-edit { width: 88px; }
.m-view { width: 100px; }
.m-history { width: 128px; }
.m-bookmarks { width: 176px; }
.m-tools { width: 106px; }
.m-window { width: 137px; }
.status { display: flex; padding-right: 32px; }
.battery { width: 52px; height: 26px; margin: 24px 37px 0 0; }
.wifi { width: 34px; height: 26px; margin: 23px 40px 0 0; }
.search { width: 26px; height: 26px; margin: 25px 38px 0 0; }
.control { width: 30px; height: 28px; margin: 23px 35px 0 0; }
.clock { line-height: 72px; letter-spacing: -.1px; }
.clock-date { width: 154px; }
.clock-time { width: 118px; }
.sliver { background: linear-gradient(90deg, #000 3%, #2a3a8c 5%, #32449a 8%, #a8b4cc 9%, #39415a 11%, #2c3346 20%, #000 33%, #000 39%, #7d8294 39.300%, #7d8294 40%, #000 40.300%, #000 60%, #2a3040 80%, #67728c 85%, #232938 90%, #67728c 94%, #111 98%); }

/* browser window */
.window { display: flex; flex-direction: column; border-radius: 20px 20px 22px 22px; overflow: hidden; background: #fff; }
.tabstrip { display: flex; align-items: flex-start; height: 88px; background: #1c1b21; border: 2px solid #5f5d64; border-bottom: 0; border-radius: 20px 20px 0 0; }
.lights { display: flex; gap: 16px; padding: 30px 0 0 24px; }
.light { width: 24px; height: 24px; border-radius: 50%; }
.close { background: #ed6a5e; }
.minimise { background: #f4be4f; }
.zoom { background: #61c554; }
.pinned { width: 30px; height: 31px; margin: 26px 29px 0 107px; }
.tab-edge { flex: none; width: 2px; height: 86px; background: #5b5b66; }
.tab { display: flex; justify-content: space-between; width: 442px; height: 72px; margin: 6px 31px 0 8px; border-radius: 8px; background: #42414d; box-shadow: 0 0 4px rgba(0,0,0,.4); }
.tab-title { padding-left: 16px; color: #fbfbfe; font-size: 22px; font-weight: 500; letter-spacing: -.25px; line-height: 75px; }
.tab-close { width: 16px; height: 16px; margin: 28px 24px 0 0; }
.newtab { width: 24px; height: 24px; margin-top: 31px; }
.alltabs { width: 26px; height: 14px; margin: 35px 105px 0 auto; }
.toolbar { display: flex; align-items: center; height: 82px; background: #2b2a33; border: 2px solid #0a0a0c; border-width: 0 0 2px; padding: 0 34px 0 32px; box-shadow: inset 2px 0 #4a4951, inset -2px 0 #4a4951; }
.nav-icon { width: 32px; height: 32px; margin: 2px 40px 0 0; }
.urlbar { display: flex; align-items: center; width: 2100px; height: 64px; margin-left: 214px; padding: 0 16px 0 17px; background: #1c1b21; border-radius: 8px; }
.shield { width: 30px; height: 34px; margin-right: 27px; }
.doc { width: 26px; height: 30px; margin-right: 24px; }
.url { color: #fbfbfe; font-size: 28px; font-weight: 500; letter-spacing: -.05px; line-height: 64px; padding-top: 2px; }
.port { color: #8f8e96; }
.star { width: 32px; height: 32px; margin-left: auto; }
.tools { display: flex; align-items: center; gap: 44px; margin: 1px 1px 0 auto; }
.pocket { width: 30px; height: 28px; }
.puzzle { width: 28px; height: 34px; }
.burger { width: 26px; height: 20px; }

/* document */
.page { flex: 1; padding: 0 16px; color: #000; font-family: "Liberation Serif", serif; font-size: 32px; line-height: 42px; }
h1 { margin: 39px 0 49px; color: #f0a83c; font-size: 64px; line-height: 74px; text-align: center; }
.list { margin: 0; padding: 0 0 0 80px; list-style: none; }
.list li { display: flex; align-items: center; }
.list li::before { content: ""; width: 11px; height: 11px; margin: 0 16px 0 -27px; border-radius: 50%; background: #000; }
.list a { color: #00e; letter-spacing: .12px; text-underline-offset: 3px; text-decoration-thickness: 2px; }

/* dock */
.shelf { display: grid; }
.wallpaper { grid-area: 1 / 1; width: 3024px; height: 168px; overflow: hidden; }
.dock { grid-area: 1 / 1; display: flex; width: 2791px; height: 156px; margin: 2px 0 0 117px; padding: 0 3px; border: 2px solid rgba(255,255,255,.2); border-radius: 44px; background: linear-gradient(90deg, #2a2c49 0, #2f3654 4%, #383f5e 8%, #303546 12%, #2f3345 15%, #383e50 21%, #41475a 26.500%, #2f323a 31%, #26282f 33.500%, #32364a 37%, #393f54 41%, #404560 46%, #485066 51%, #4a546c 54%, #363b4c 57%, #202226 60%, #17181b 64%, #1a1b20 68%, #1a1c2a 71%, #2d3459 75%, #363d5e 78%, #3b4257 82%, #3c4658 86%, #333a4e 89.500%, #34384f 94%, #40425a 100%) border-box; box-shadow: 0 0 0 1px rgba(0,0,0,.5), 0 0 100px rgba(0,0,0,.26); }
.slot { display: flex; flex-direction: column; align-items: center; width: 133px; padding-top: 20px; flex: none; }
.icon { width: 102px; height: 102px; filter: drop-shadow(0 2px 2px rgba(0,0,0,.3)); }
.running::after { content: ""; width: 8px; height: 8px; margin-top: 20px; border-radius: 50%; background: #fff; opacity: .62; }
.divider { flex: none; width: 2px; height: 116px; background: rgba(255,255,255,.36); }
.apps-end { margin: 18px 28.500px 0 30px; }
.files-end { margin: 18px 28px 0 29.500px; }
.cal-month { fill: #fff; font: 700 18.500px Inter, sans-serif; }
.cal-day { fill: #222; font: 300 64px Inter, sans-serif; }
.note-n { fill: #fff; font: 700 28px Inter, sans-serif; }
.petals { isolation: isolate; }
.petals > * { mix-blend-mode: multiply; opacity: .92; }
```
